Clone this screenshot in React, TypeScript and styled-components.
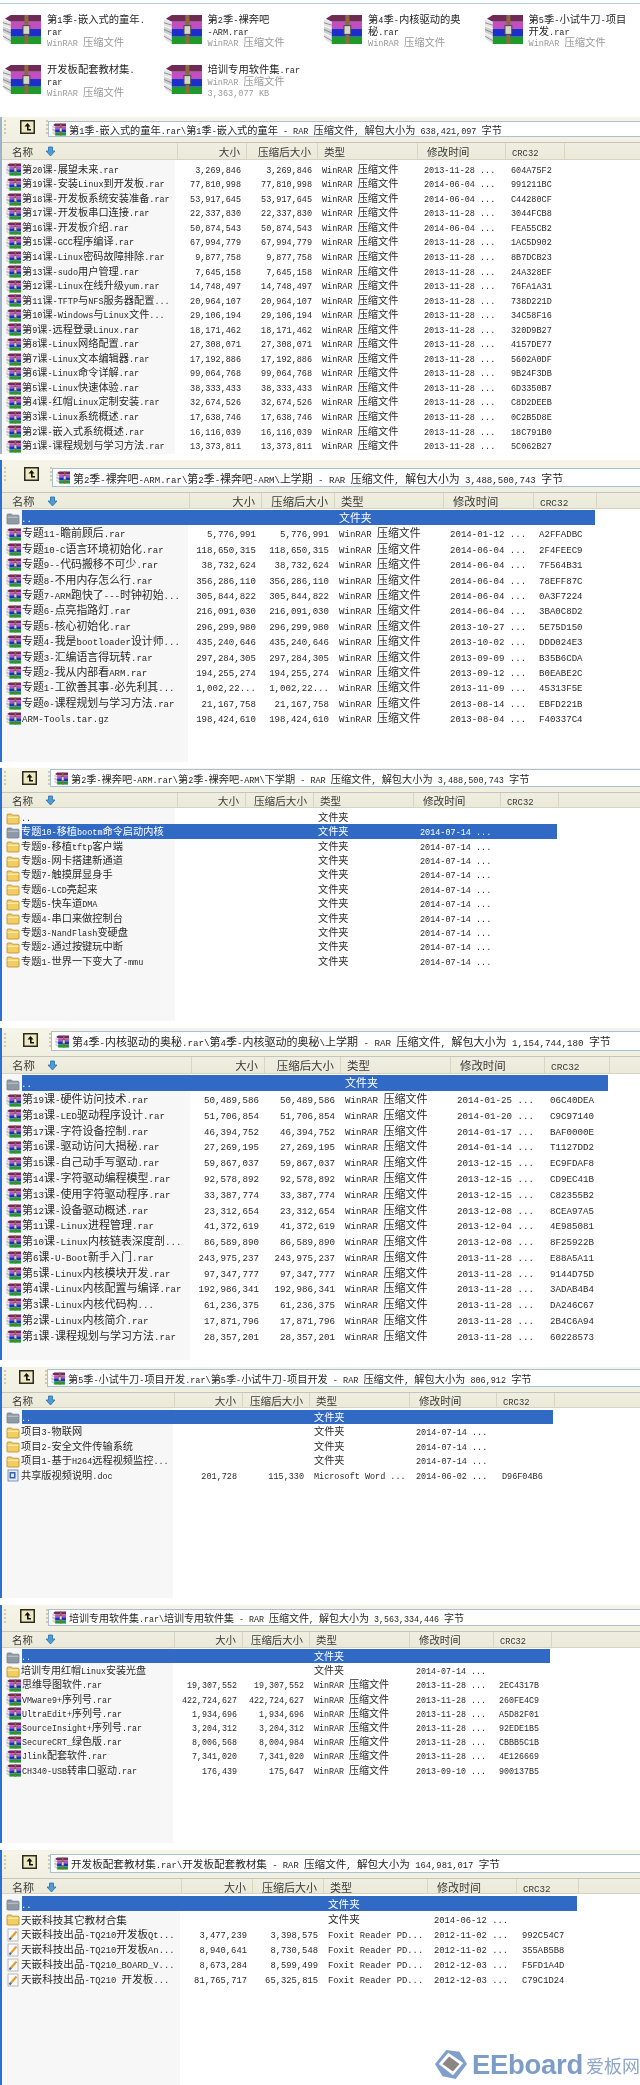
import React from 'react';
import styled, { createGlobalStyle } from 'styled-components';

type Kind = 'rar' | 'folder' | 'doc' | 'pdf' | 'folderGray';
type Row = { name: string; size?: string; packed?: string; type: string; date?: string; crc?: string; kind: Kind; selected?: boolean };
type Win = {
  address: string;
  height: number;
  gap: number;
  bar: number;
  addrH: number;
  addrX: number;
  head: number;
  rowH: number;
  fs: number;
  cols: number[];
  edge: string;
  rows: Row[];
};

const RAR_TYPE = 'WinRAR 压缩文件';
const rar = (name: string, size: string, date: string, crc: string, packed?: string): Row => ({
  name,
  size,
  packed: packed || size,
  type: RAR_TYPE,
  date: date + ' ...',
  crc,
  kind: 'rar',
});
const dir = (name: string, date: string): Row => ({ name, type: '文件夹', date: date + ' ...', kind: 'folder' });
const pdf = (name: string, size: string, packed: string, date: string, crc: string): Row => ({
  name,
  size,
  packed,
  type: 'Foxit Reader PD...',
  date: date + ' ...',
  crc,
  kind: 'pdf',
});
const up: Row = { name: '..', type: '文件夹', kind: 'folderGray', selected: true };

const windows: Win[] = [
  {
    address: '第1季-嵌入式的童年.rar\\第1季-嵌入式的童年 - RAR 压缩文件, 解包大小为 638,421,097 字节',
    height: 337, gap: 6, bar: 26, addrH: 16, addrX: 48, head: 18.7, rowH: 14.55, fs: 10.2,
    cols: [175.5, 69.5, 71, 100, 88, 59],
    edge: '#9db4c8',
    rows: [
      rar('第20课-展望未来.rar', '3,269,846', '2013-11-28', '604A75F2'),
      rar('第19课-安装Linux到开发板.rar', '77,810,998', '2014-06-04', '991211BC'),
      rar('第18课-开发板系统安装准备.rar', '53,917,645', '2014-06-04', 'C44280CF'),
      rar('第17课-开发板串口连接.rar', '22,337,830', '2013-11-28', '3044FCB8'),
      rar('第16课-开发板介绍.rar', '50,874,543', '2014-06-04', 'FEA55CB2'),
      rar('第15课-GCC程序编译.rar', '67,994,779', '2013-11-28', '1AC5D902'),
      rar('第14课-Linux密码故障排除.rar', '9,877,758', '2013-11-28', '8B7DCB23'),
      rar('第13课-sudo用户管理.rar', '7,645,158', '2013-11-28', '24A328EF'),
      rar('第12课-Linux在线升级yum.rar', '14,748,497', '2013-11-28', '76FA1A31'),
      rar('第11课-TFTP与NFS服务器配置...', '20,964,107', '2013-11-28', '738D221D'),
      rar('第10课-Windows与Linux文件...', '29,106,194', '2013-11-28', '34C58F16'),
      rar('第9课-远程登录Linux.rar', '18,171,462', '2013-11-28', '320D9B27'),
      rar('第8课-Linux网络配置.rar', '27,308,071', '2013-11-28', '4157DE77'),
      rar('第7课-Linux文本编辑器.rar', '17,192,886', '2013-11-28', '5602A0DF'),
      rar('第6课-Linux命令详解.rar', '99,064,768', '2013-11-28', '9B24F3DB'),
      rar('第5课-Linux快速体验.rar', '38,333,433', '2013-11-28', '6D3350B7'),
      rar('第4课-红帽Linux定制安装.rar', '32,674,526', '2013-11-28', 'C8D2DEEB'),
      rar('第3课-Linux系统概述.rar', '17,638,746', '2013-11-28', '0C2B5D8E'),
      rar('第2课-嵌入式系统概述.rar', '16,116,039', '2013-11-28', '18C791B0'),
      rar('第1课-课程规划与学习方法.rar', '13,373,811', '2013-11-28', '5C062B27'),
    ],
  },
  {
    address: '第2季-裸奔吧-ARM.rar\\第2季-裸奔吧-ARM\\上学期 - RAR 压缩文件, 解包大小为 3,488,500,743 字节',
    height: 302, gap: 6, bar: 33, addrH: 19, addrX: 52, head: 17, rowH: 15.4, fs: 10.9,
    cols: [188, 72, 73, 109, 90, 63],
    edge: '#2a6fd6',
    rows: [
      up,
      rar('专题11-瞻前顾后.rar', '5,776,991', '2014-01-12', 'A2FFADBC'),
      rar('专题10-C语言环境初始化.rar', '118,650,315', '2014-06-04', '2F4FEEC9'),
      rar('专题9--代码搬移不可少.rar', '38,732,624', '2014-06-04', '7F564B31'),
      rar('专题8-不用内存怎么行.rar', '356,286,110', '2014-06-04', '78EFF87C'),
      rar('专题7-ARM跑快了---时钟初始...', '305,844,822', '2014-06-04', '0A3F7224'),
      rar('专题6-点亮指路灯.rar', '216,091,030', '2014-06-04', '3BA0C8D2'),
      rar('专题5-核心初始化.rar', '296,299,980', '2013-10-27', '5E75D150'),
      rar('专题4-我是bootloader设计师...', '435,240,646', '2013-10-02', 'DDD024E3'),
      rar('专题3-汇编语言得玩转.rar', '297,284,305', '2013-09-09', 'B35B6CDA'),
      rar('专题2-我从内部看ARM.rar', '194,255,274', '2013-09-12', 'B0EABE2C'),
      rar('专题1-工欲善其事-必先利其...', '1,002,22...', '2013-11-09', '45313F5E'),
      rar('专题0-课程规划与学习方法.rar', '21,167,758', '2013-08-14', 'EBFD221B'),
      rar('ARM-Tools.tar.gz', '198,424,610', '2013-08-04', 'F40337C4'),
    ],
  },
  {
    address: '第2季-裸奔吧-ARM.rar\\第2季-裸奔吧-ARM\\下学期 - RAR 压缩文件, 解包大小为 3,488,500,743 字节',
    height: 253, gap: 7, bar: 25, addrH: 18, addrX: 50, head: 16.8, rowH: 14.4, fs: 10.2,
    cols: [175.5, 68.5, 68, 100, 87, 58],
    edge: '#2a6fd6',
    rows: [
      { name: '..', type: '文件夹', kind: 'folder' },
      { ...dir('专题10-移植bootm命令启动内核', '2014-07-14'), kind: 'folderGray', selected: true },
      dir('专题9-移植tftp客户端', '2014-07-14'),
      dir('专题8-网卡搭建新通道', '2014-07-14'),
      dir('专题7-触摸屏显身手', '2014-07-14'),
      dir('专题6-LCD亮起来', '2014-07-14'),
      dir('专题5-快车道DMA', '2014-07-14'),
      dir('专题4-串口来做控制台', '2014-07-14'),
      dir('专题3-NandFlash变硬盘', '2014-07-14'),
      dir('专题2-通过按键玩中断', '2014-07-14'),
      dir('专题1-世界一下变大了-mmu', '2014-07-14'),
    ],
  },
  {
    address: '第4季-内核驱动的奥秘.rar\\第4季-内核驱动的奥秘\\上学期 - RAR 压缩文件, 解包大小为 1,154,744,180 字节',
    height: 332, gap: 7, bar: 29, addrH: 20, addrX: 51, head: 18.4, rowH: 15.77, fs: 11,
    cols: [190, 73, 76, 110, 94, 65],
    edge: '#2a6fd6',
    rows: [
      up,
      rar('第19课-硬件访问技术.rar', '50,489,586', '2014-01-25', '06C40DEA'),
      rar('第18课-LED驱动程序设计.rar', '51,706,854', '2014-01-20', 'C9C97140'),
      rar('第17课-字符设备控制.rar', '46,394,752', '2014-01-17', 'BAF0000E'),
      rar('第16课-驱动访问大揭秘.rar', '27,269,195', '2014-01-14', 'T1127DD2'),
      rar('第15课-自己动手写驱动.rar', '59,867,037', '2013-12-15', 'EC9FDAF8'),
      rar('第14课-字符驱动编程模型.rar', '92,578,892', '2013-12-15', 'CD9EC41B'),
      rar('第13课-使用字符驱动程序.rar', '33,387,774', '2013-12-15', 'C82355B2'),
      rar('第12课-设备驱动概述.rar', '23,312,654', '2013-12-08', '8CEA97A5'),
      rar('第11课-Linux进程管理.rar', '41,372,619', '2013-12-04', '4E985081'),
      rar('第10课-Linux内核链表深度剖...', '86,589,890', '2013-12-08', '8F25922B'),
      rar('第6课-U-Boot新手入门.rar', '243,975,237', '2013-11-28', 'E88A5A11'),
      rar('第5课-Linux内核模块开发.rar', '97,347,777', '2013-11-28', '9144D75D'),
      rar('第4课-Linux内核配置与编译.rar', '192,986,341', '2013-11-28', '3ADAB4B4'),
      rar('第3课-Linux内核代码构...', '61,236,375', '2013-11-28', 'DA246C67'),
      rar('第2课-Linux内核简介.rar', '17,871,796', '2013-11-28', '2B4C6A94'),
      rar('第1课-课程规划与学习方法.rar', '28,357,201', '2013-11-28', '60228573'),
    ],
  },
  {
    address: '第5季-小试牛刀-项目开发.rar\\第5季-小试牛刀-项目开发 - RAR 压缩文件, 解包大小为 806,912 字节',
    height: 231, gap: 7, bar: 26, addrH: 18, addrX: 47, head: 16.7, rowH: 14.5, fs: 10.2,
    cols: [173, 68, 67, 100, 87, 58],
    edge: '#2a6fd6',
    rows: [
      up,
      dir('项目3-物联网', '2014-07-14'),
      dir('项目2-安全文件传输系统', '2014-07-14'),
      dir('项目1-基于H264远程视频监控...', '2014-07-14'),
      { name: '共享版视频说明.doc', size: '201,728', packed: '115,330', type: 'Microsoft Word ...', date: '2014-06-02 ...', crc: 'D96F04B6', kind: 'doc' },
    ],
  },
  {
    address: '培训专用软件集.rar\\培训专用软件集 - RAR 压缩文件, 解包大小为 3,563,334,446 字节',
    height: 238, gap: 7, bar: 27, addrH: 17, addrX: 48, head: 17, rowH: 14.2, fs: 10,
    cols: [173, 68, 67, 100, 84, 58],
    edge: '#2a6fd6',
    rows: [
      up,
      dir('培训专用红帽Linux安装光盘', '2014-07-14'),
      rar('思维导图软件.rar', '19,307,552', '2013-11-28', '2EC4317B'),
      rar('VMware9+序列号.rar', '422,724,627', '2013-11-28', '260FE4C9'),
      rar('UltraEdit+序列号.rar', '1,934,696', '2013-11-28', 'A5D82F01'),
      rar('SourceInsight+序列号.rar', '3,204,312', '2013-11-28', '92EDE1B5'),
      rar('SecureCRT_绿色版.rar', '8,006,568', '2013-11-28', 'CBBB5C1B', '8,004,984'),
      rar('Jlink配套软件.rar', '7,341,020', '2013-11-28', '4E126669'),
      rar('CH340-USB转串口驱动.rar', '176,439', '2013-09-10', '900137B5', '175,647'),
    ],
  },
  {
    address: '开发板配套教材集.rar\\开发板配套教材集 - RAR 压缩文件, 解包大小为 164,981,017 字节',
    height: 235, gap: 0, bar: 29, addrH: 19, addrX: 50, head: 16.5, rowH: 15, fs: 10.6,
    cols: [180, 71, 71, 104, 89, 62],
    edge: '#2a6fd6',
    rows: [
      up,
      dir('天嵌科技其它教材合集', '2014-06-12'),
      pdf('天嵌科技出品-TQ210开发板Qt...', '3,477,239', '3,398,575', '2012-11-02', '992C54C7'),
      pdf('天嵌科技出品-TQ210开发板An...', '8,940,641', '8,730,548', '2012-11-02', '355AB5B8'),
      pdf('天嵌科技出品-TQ210_BOARD_V...', '8,673,284', '8,599,499', '2012-12-03', 'F5FD1A4D'),
      pdf('天嵌科技出品-TQ210 开发板...', '81,765,717', '65,325,815', '2012-12-03', 'C79C1D24'),
    ],
  },
];

const archives = [
  { lines: ['第1季-嵌入式的童年.', 'rar'], sub: [RAR_TYPE] },
  { lines: ['第2季-裸奔吧', '-ARM.rar'], sub: [RAR_TYPE] },
  { lines: ['第4季-内核驱动的奥', '秘.rar'], sub: [RAR_TYPE] },
  { lines: ['第5季-小试牛刀-项目', '开发.rar'], sub: [RAR_TYPE] },
  { lines: ['开发板配套教材集.', 'rar'], sub: [RAR_TYPE] },
  { lines: ['培训专用软件集.rar'], sub: [RAR_TYPE, '3,363,077 KB'] },
];

const GlobalStyle = createGlobalStyle`
  html, body {
    margin: 0;
    padding: 0;
    background: #fff;
  }
`;

const Page = styled.div`
  position: relative;
  width: 640px;
  height: 2085px;
  overflow: hidden;
  background: #fff;
  color: #262626;
  font-family: "Noto Sans CJK SC", "Liberation Serif", sans-serif;
  filter: blur(0.35px);
`;

// Latin runs: the original font sets them at exactly half the width of a Chinese character
const HalfWidth = styled.span`
  font-family: "Liberation Mono", monospace;
  font-size: 0.833em;
  white-space: pre;
`;

const Mixed = ({ text }: { text: string }) => (
  <span>
    {text.split(/([\u0020-\u007e]+)/).map((part, i) =>
      i % 2 ? <HalfWidth key={i}>{part}</HalfWidth> : part
    )}
  </span>
);

const TopRule = styled.div`
  height: 1px;
  margin-top: 3px;
  background: #b6cbdd;
`;

const ArchiveGrid = styled.div`
  display: grid;
  grid-template-columns: repeat(4, 160.5px);
  grid-auto-rows: 50px;
  height: 113px;
  padding: 9px 0 0 2px;
  box-sizing: border-box;
`;

const Archive = styled.div`
  display: flex;
  gap: 6px;
  font-size: 10.3px;
`;

const ArchiveIcon = styled.div`
  padding-top: 1px;
  flex: none;
`;

const ArchiveText = styled.div`
  display: flex;
  flex-direction: column;
`;

const ArchiveLine = styled.div<{ $muted?: boolean }>`
  height: 11.5px;
  line-height: 11.5px;
  white-space: nowrap;
  color: ${p => (p.$muted ? '#9a9a9a' : '#262626')};
`;

const Window = styled.section<{ $h: number; $gap: number; $edge: string; $fs: number }>`
  height: ${p => p.$h}px;
  margin-bottom: ${p => p.$gap}px;
  box-sizing: border-box;
  border-left: 2px solid ${p => p.$edge};
  display: flex;
  flex-direction: column;
  overflow: hidden;
  font-size: ${p => p.$fs}px;
`;

const Toolbar = styled.div<{ $h: number; $addrX: number }>`
  flex: none;
  height: ${p => p.$h}px;
  box-sizing: border-box;
  padding-bottom: 5px;
  display: grid;
  grid-template-columns: ${p => p.$addrX - 2}px 1fr;
  align-items: end;
  background: linear-gradient(#f6f4e6, #f1efe0);
  border-bottom: 1px solid #c3c5c0;
`;

const ToolGroup = styled.div`
  display: flex;
  align-items: center;
  height: 100%;
  padding-left: 2px;
  gap: 6px;
`;

const Grip = styled.div`
  width: 2px;
  height: 14px;
  border-left: 2px dotted #cfcbb0;
`;

const UpButton = styled.div<{ $ml: number }>`
  display: flex;
  margin: 0 5px 0 ${p => p.$ml}px;
`;

const AddressBox = styled.div<{ $h: number }>`
  height: ${p => p.$h}px;
  box-sizing: border-box;
  display: flex;
  align-items: center;
  gap: 3px;
  padding-left: 3px;
  background: #fff;
  border: 1px solid #a9c0d4;
  border-right: none;
  white-space: nowrap;
`;

const Columns = styled.div<{ $cols: number[]; $h: number }>`
  display: grid;
  grid-template-columns: ${p => p.$cols.map(c => c + 'px').join(' ')} 1fr;
  height: ${p => p.$h}px;
`;

const HeaderRow = styled(Columns)`
  flex: none;
  font-size: 1.04em;
  color: #3a3a3a;
  background: linear-gradient(#f0eee0, #ebe9d9);
  border-bottom: 1px solid #d6d3c0;
  box-sizing: border-box;
`;

const HeaderCell = styled.div<{ $right?: boolean; $pl?: number }>`
  display: flex;
  align-items: center;
  gap: 12px;
  justify-content: ${p => (p.$right ? 'flex-end' : 'flex-start')};
  padding: ${p => (p.$right ? '0 6px 0 0' : `0 0 0 ${p.$pl ?? 6}px`)};
  border-right: 1px solid #d8d5c2;
  white-space: nowrap;
`;

const List = styled.div<{ $nameW: number }>`
  flex: 1;
  padding-top: 1.5px;
  background: linear-gradient(to right, #f7f7f7 ${p => p.$nameW - 2}px, #fff ${p => p.$nameW - 2}px);
`;

const FileRow = styled(Columns)<{ $selected?: boolean }>`
  width: ${p => p.$cols.reduce((a, b) => a + b, 0) - 2}px;
  grid-template-columns: ${p => p.$cols.map(c => c + 'px').join(' ')};
  line-height: ${p => p.$h}px;
  color: ${p => (p.$selected ? '#fff' : '#2a2a2a')};
  background: ${p => (p.$selected ? 'linear-gradient(to right, transparent 20px, #316ac5 20px)' : 'transparent')};
`;

const NameCell = styled.div`
  display: flex;
  align-items: center;
  gap: 1px;
  padding-left: 4px;
  white-space: nowrap;
  min-width: 0;

  svg {
    flex: none;
  }
`;

const NumCell = styled.div`
  text-align: right;
  padding-right: 6px;
  white-space: nowrap;
`;

const TextCell = styled.div<{ $pl: number }>`
  padding-left: ${p => p.$pl}px;
  white-space: nowrap;
`;

const Watermark = styled.div`
  position: absolute;
  left: 435px;
  top: 2049px;
  width: 205px;
  display: flex;
  align-items: center;
  gap: 5px;
  height: 31px;
  color: #7c9cc9;
  white-space: nowrap;
`;

const WatermarkWord = styled.span`
  font-family: "Liberation Sans", sans-serif;
  font-weight: 700;
  font-size: 27.5px;
  letter-spacing: -0.3px;
`;

const WatermarkCn = styled.span`
  font-family: "Noto Sans CJK SC", sans-serif;
  font-size: 18px;
  color: #8ea6c8;
  margin-left: -2px;
`;

const RarIcon = ({ w, h }: { w: number; h: number }) => (
  <svg width={w} height={h} viewBox="0 0 40 32" preserveAspectRatio="none">
    <polygon points="3,5 9,1 40,1 40,8 9,8" fill="#6f2a55" />
    <polygon points="1,6 9,8 9,15 1,12" fill="#e4e4e4" />
    <polygon points="1,13 9,16 9,23 1,19" fill="#cfcfcf" />
    <polygon points="1,20 9,24 9,31 2,26" fill="#e4e4e4" />
    <line x1="1" y1="9" x2="9" y2="11.5" stroke="#777" strokeWidth="0.8" />
    <line x1="1" y1="16" x2="9" y2="19.5" stroke="#777" strokeWidth="0.8" />
    <line x1="1" y1="23" x2="9" y2="27.5" stroke="#777" strokeWidth="0.8" />
    <rect x="9" y="8" width="31" height="7.5" fill="#c14fc0" />
    <rect x="9" y="15.5" width="31" height="8" fill="#1a2fca" />
    <rect x="9" y="23.5" width="31" height="7.5" fill="#1d9a2a" />
    <rect x="23" y="1" width="4" height="30" fill="#8b6b3c" />
    <rect x="21.5" y="12" width="7" height="9" fill="#d6d6c8" stroke="#444" strokeWidth="1" />
  </svg>
);

const FolderIcon = ({ gray }: { gray?: boolean }) => (
  <svg width="14" height="13" viewBox="0 0 14 13">
    <path d="M1 3.5 L1.5 2 H5.5 L6.5 3.2 H12.5 L13 4 V11.5 L12.5 12 H1.5 L1 11.5 Z" fill={gray ? '#8d99a3' : '#f2cd62'} stroke={gray ? '#75818b' : '#b88a2c'} strokeWidth="0.8" />
    <rect x="1.6" y="4.6" width="10.8" height="1.4" fill={gray ? '#b3bcc4' : '#fdeba8'} />
  </svg>
);

const DocIcon = () => (
  <svg width="14" height="13" viewBox="0 0 14 13">
    <rect x="2" y="1" width="10" height="11" fill="#e6edf8" stroke="#5b7bb5" strokeWidth="0.8" />
    <rect x="3.5" y="3" width="6" height="6.5" fill="#3a5fae" />
    <rect x="5" y="4.5" width="3" height="3.5" fill="#dfe8f6" />
  </svg>
);

const PdfIcon = () => (
  <svg width="14" height="14" viewBox="0 0 14 14">
    <rect x="2" y="1" width="10" height="12" fill="#fbfbfb" stroke="#a9a9a9" strokeWidth="0.8" />
    <path d="M3.5 11.5 L10.5 3.5" stroke="#e99a28" strokeWidth="2" />
    <path d="M3.5 11.5 L5 9.8" stroke="#3d6fb8" strokeWidth="2" />
  </svg>
);

const SortArrow = () => (
  <svg width="11" height="11" viewBox="0 0 11 11">
    <path d="M3.5 1 H7.5 V5 H10 L5.5 10 L1 5 H3.5 Z" fill="#4f9bd6" stroke="#2a6fa8" strokeWidth="0.8" />
  </svg>
);

const UpIcon = () => (
  <svg width="15" height="14" viewBox="0 0 15 14">
    <rect x="0.75" y="0.75" width="13.5" height="12.5" fill="#efe9bf" stroke="#2b2a20" strokeWidth="1.5" />
    <path d="M7.5 3 L10.5 6.5 H8.6 V9 H11 V10.5 H7 V6.5 H4.5 Z" fill="#111" />
  </svg>
);

const LogoMark = () => (
  <svg width="34" height="31" viewBox="0 0 34 31">
    <polygon points="0,15 12,0 26,2 34,15 22,31 8,28" fill="#7f9fcd" />
    <polygon points="4,15 14,3 30,14 19,27" fill="#fff" />
    <polygon points="8,15 15,7 26,15 19,23" fill="#8b8583" />
  </svg>
);

const KindIcon = ({ kind }: { kind: Kind }) => {
  if (kind === 'rar') return <RarIcon w={15} h={13} />;
  if (kind === 'folder') return <FolderIcon />;
  if (kind === 'folderGray') return <FolderIcon gray />;
  if (kind === 'doc') return <DocIcon />;
  return <PdfIcon />;
};

const ArchiveWindow = ({ win }: { win: Win }) => {
  const { cols } = win;
  return (
    <Window $h={win.height} $gap={win.gap} $edge={win.edge} $fs={win.fs}>
      <Toolbar $h={win.bar} $addrX={win.addrX}>
        <ToolGroup>
          <Grip />
          <UpButton $ml={win.addrX - 41}>
            <UpIcon />
          </UpButton>
          <Grip />
        </ToolGroup>
        <AddressBox $h={win.addrH}>
          <RarIcon w={14} h={13} />
          <Mixed text={win.address} />
        </AddressBox>
      </Toolbar>
      <HeaderRow $cols={cols} $h={win.head - 1.5}>
        <HeaderCell $pl={10}>
          名称
          <SortArrow />
        </HeaderCell>
        <HeaderCell $right>大小</HeaderCell>
        <HeaderCell $right>压缩后大小</HeaderCell>
        <HeaderCell>类型</HeaderCell>
        <HeaderCell $pl={9}>修改时间</HeaderCell>
        <HeaderCell>
          <Mixed text="CRC32" />
        </HeaderCell>
        <div />
      </HeaderRow>
      <List $nameW={cols[0]}>
        {win.rows.map(row => (
          <FileRow key={row.name} $cols={cols} $h={win.rowH} $selected={row.selected}>
            <NameCell>
              <KindIcon kind={row.kind} />
              <Mixed text={row.name} />
            </NameCell>
            <NumCell>
              <Mixed text={row.size || ''} />
            </NumCell>
            <NumCell>
              <Mixed text={row.packed || ''} />
            </NumCell>
            <TextCell $pl={4}>
              <Mixed text={row.type} />
            </TextCell>
            <TextCell $pl={6}>
              <Mixed text={row.date || ''} />
            </TextCell>
            <TextCell $pl={5}>
              <Mixed text={row.crc || ''} />
            </TextCell>
          </FileRow>
        ))}
      </List>
    </Window>
  );
};

const App = () => {
  return (
    <Page>
      <GlobalStyle />
      <TopRule />
      <ArchiveGrid>
        {archives.map(item => (
          <Archive key={item.lines[0]}>
            <ArchiveIcon>
              <RarIcon w={39} h={31} />
            </ArchiveIcon>
            <ArchiveText>
              {item.lines.map(line => (
                <ArchiveLine key={line}>
                  <Mixed text={line} />
                </ArchiveLine>
              ))}
              {item.sub.map(line => (
                <ArchiveLine key={line} $muted>
                  <Mixed text={line} />
                </ArchiveLine>
              ))}
            </ArchiveText>
          </Archive>
        ))}
      </ArchiveGrid>
      {windows.map(win => (
        <ArchiveWindow key={win.address} win={win} />
      ))}
      <Watermark>
        <LogoMark />
        <WatermarkWord>EEboard</WatermarkWord>
        <WatermarkCn>爱板网</WatermarkCn>
      </Watermark>
    </Page>
  );
};

export default App;
